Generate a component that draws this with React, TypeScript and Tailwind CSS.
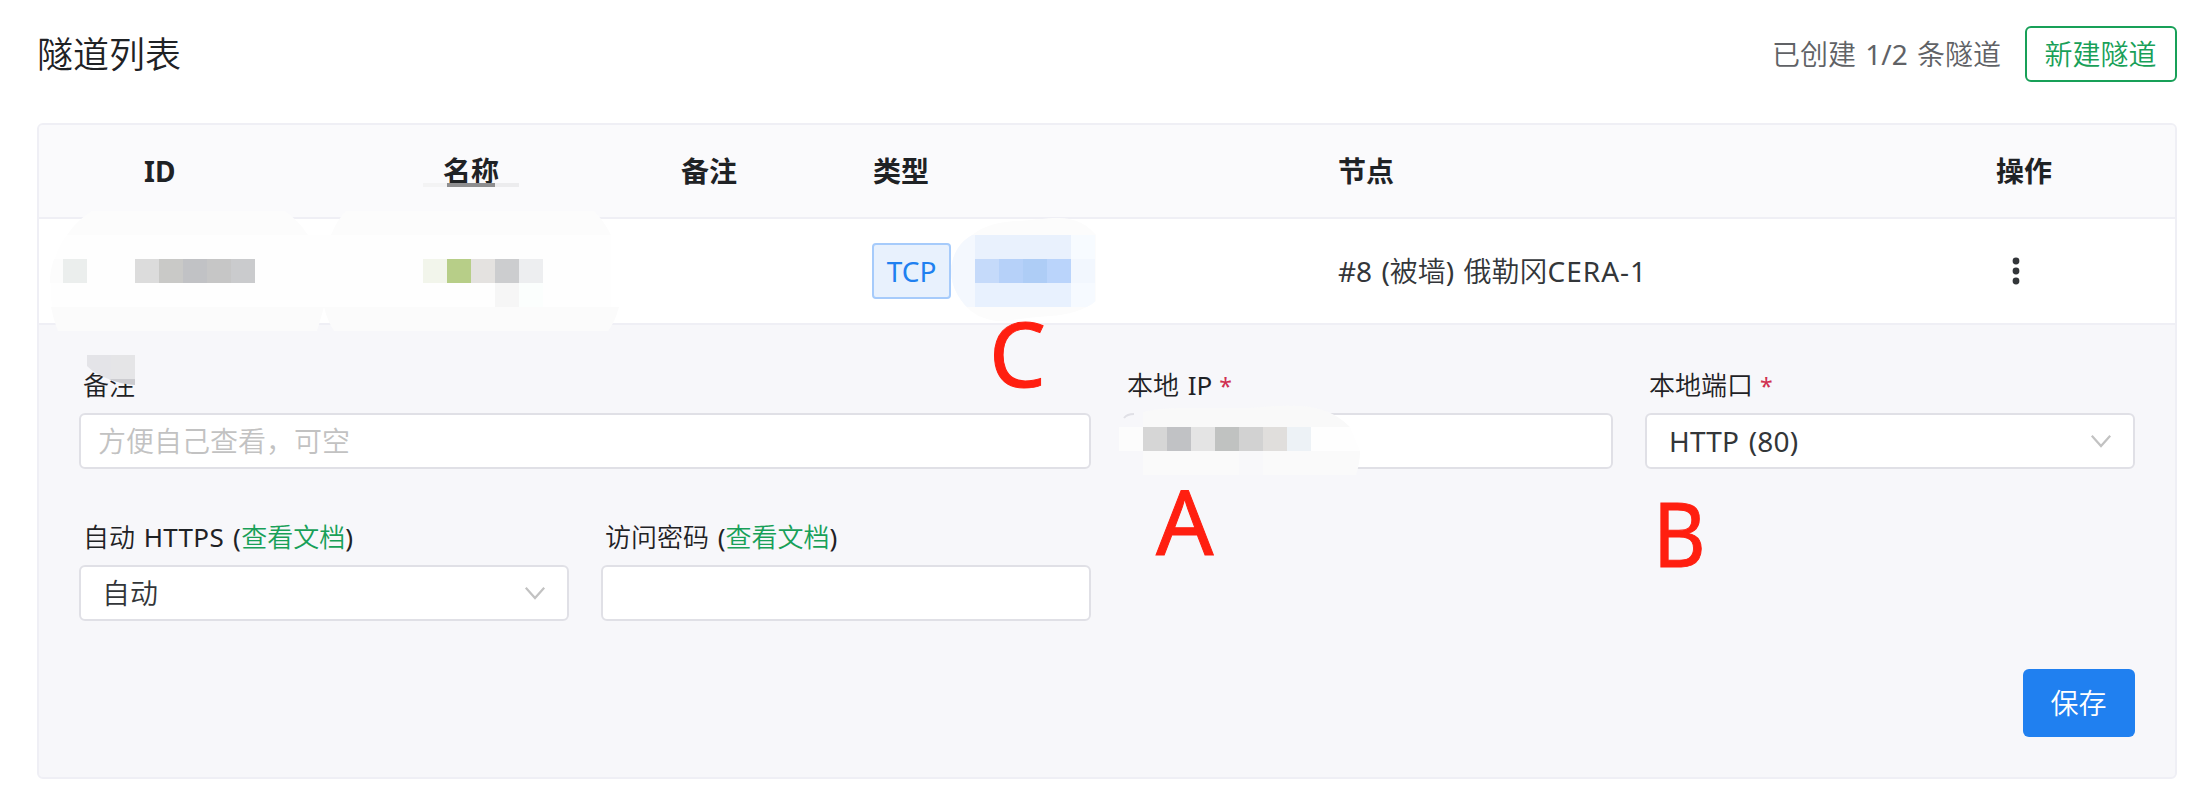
import React from "react";

const columns = "grid grid-cols-[380px_238px_192px_465px_559px_302px] items-center";

function Chevron() {
  return (
    <svg className="h-8 w-8 shrink-0" viewBox="0 0 32 32" fill="none" stroke="#c2c2c2" strokeWidth="2.2">
      <path d="M6.8 10.8 16 21 25.2 10.8" />
    </svg>
  );
}

function Field({ label, wide, children }: { label: React.ReactNode; wide?: boolean; children: React.ReactNode }) {
  return (
    <div className={wide ? "col-span-2" : ""}>
      <div className="flex h-[52px] items-start pl-1 pt-[4px] text-[26px] leading-[40px] text-[#1f2225]">
        <span className="whitespace-pre">{label}</span>
      </div>
      {children}
    </div>
  );
}

function Input({ children }: { children?: React.ReactNode }) {
  return (
    <div className="flex h-14 items-center rounded-md border-2 border-[#e0e0e6] bg-white pl-[17px] text-[28px] leading-none text-[#c2c2c2]">
      {children}
    </div>
  );
}

function Select({ children }: { children: React.ReactNode }) {
  return (
    <div className="flex h-14 items-center justify-between rounded-md border-2 border-[#e0e0e6] bg-white pl-[21px] pr-4 text-[28px] leading-none text-[#333639]">
      <span>{children}</span>
      <Chevron />
    </div>
  );
}

const Latin = ({ children }: { children: React.ReactNode }) => <span className="font-normal">{children}</span>;
const DocLink = () => <a className="text-[#18a058]">查看文档</a>;
const Star = () => <span className="-ml-px text-[23px] font-normal text-[#d03050]"> *</span>;

type Tile = [number, number, string];

const tiles: Tile[] = [
  [63, 259, "#ebeeed"],
  [135, 259, "#dcdcdc"],
  [159, 259, "#c9c9c7"],
  [183, 259, "#c1c2c5"],
  [207, 259, "#c6c6c6"],
  [231, 259, "#cacbcd"],
  [423, 259, "#f2f5eb"],
  [447, 259, "#b7ce88"],
  [471, 259, "#e4e2e0"],
  [495, 259, "#cccdcf"],
  [519, 259, "#edeef0"],
  [495, 283, "#f6f6f6"],
  [519, 283, "#fbfefd"],
];

const typeTiles: Tile[] = [
  [975, 235, "#e9f1fd"],
  [999, 235, "#e9f1fd"],
  [1023, 235, "#e9f1fd"],
  [1047, 235, "#e9f1fd"],
  [1071, 235, "#f7fbff"],
  [975, 259, "#c5dafa"],
  [999, 259, "#b6d1f9"],
  [1023, 259, "#aecdf6"],
  [1047, 259, "#bad4fb"],
  [1071, 259, "#f2f7fe"],
  [975, 283, "#e8f1fe"],
  [999, 283, "#e8f1fe"],
  [1023, 283, "#e8f1fe"],
  [1047, 283, "#e8f1fe"],
  [1071, 283, "#f6faff"],
];

const ipTiles: Tile[] = [
  [1119, 427, "#fcfcfc"],
  [1143, 427, "#d6d6d6"],
  [1167, 427, "#c1c2c5"],
  [1191, 427, "#e4e4e4"],
  [1215, 427, "#c0c2c1"],
  [1239, 427, "#d2d2d2"],
  [1263, 427, "#e0dedc"],
  [1287, 427, "#edf2f6"],
];

function Redactions() {
  const draw = ([x, y, c]: Tile) => (
    <rect key={`${x}-${y}`} x={x} y={y} width="24" height="24" fill={c} />
  );
  return (
    <svg className="pointer-events-none absolute left-0 top-0" width="2201" height="794">
      <path d="M92 211H285Q299 221 308 235H67Q77 220 92 211Z" fill="#fcfcfc" />
      <path d="M346 211H594Q604 221 611 235H331Q337 220 346 211Z" fill="#fcfcfc" />
      <path d="M67 235H611V307H52Q47 260 67 235Z" fill="#fefefe" />
      <path d="M51 307H324L317 331H58Q53 319 51 307Z" fill="#fbfbfb" />
      <path d="M324 307H619Q615 322 608 331H334Q327 320 324 307Z" fill="#fbfbfb" />
      <path d="M54 259H63V283H50Q50 270 54 259Z" fill="#fcfcfc" />
      {tiles.map(draw)}
      <rect x="423" y="183" width="24" height="4" fill="#f3f3f4" />
      <rect x="447" y="183" width="48" height="4" fill="#8e8e90" />
      <rect x="495" y="183" width="24" height="4" fill="#ececee" />
      <clipPath id="type-blob">
        <path d="M951 270C952 254 960 242 972 235C984 225 1003 221 1020 221C1035 220 1045 218 1058 218C1076 218 1088 225 1096 235V301C1085 310 1068 315 1050 316C1030 317 1012 321 998 321C984 320 972 314 964 304C955 293 951 282 951 270Z" />
      </clipPath>
      <g clipPath="url(#type-blob)">
        <rect x="950" y="215" width="150" height="110" fill="#fcfcfc" />
        <rect x="950" y="235" width="25" height="72" fill="#f4f8fe" />
        {typeTiles.map(draw)}
      </g>
      <path d="M87 355H135V385Q102 381 87 366Z" fill="#e4e4e8" />
      <path d="M111 355H135V379H111Z" fill="#e5e5e7" />
      <path d="M109 379H135V385Q120 384 109 379Z" fill="#ccccd0" />
      <rect x="1119" y="411" width="25" height="64" fill="#f7f7fa" />
      <path d="M1124 418Q1127 414 1134 414" fill="none" stroke="#e0e0e6" strokeWidth="2" />
      <path d="M1143 412Q1160 408 1180 408H1250Q1275 405 1300 406Q1330 407 1350 427H1143Z" fill="#f9f9f9" />
      <path d="M1143 427H1350L1360 451H1143Z" fill="#fefefe" />
      <path d="M1143 451H1360Q1360 463 1356 475H1143Z" fill="#fafafa" />
      <rect x="1239" y="451" width="24" height="24" fill="#f8f8fa" />
      {ipTiles.map(draw)}
    </svg>
  );
}

export default function App() {
  return (
    <main className="relative flex h-[794px] w-[2201px] flex-col overflow-hidden bg-white pl-[37px] pr-6 font-['Noto_Sans','Noto_Sans_CJK_SC',sans-serif] font-[350] [word-spacing:2px]">
      <header className="flex h-[123px] items-start justify-between pt-[26px]">
        <h1 className="text-[36px] leading-[58px] text-[#1f2225]">隧道列表</h1>
        <div className="flex items-center gap-6">
          <span className="text-[28px] leading-[54px] text-[#606266]">
            已创建 <Latin>1/2</Latin> 条隧道
          </span>
          <button className="flex h-14 w-[152px] items-center justify-center rounded-md border-2 border-[#18a058] pr-px text-[28px] text-[#18a058]">
            新建隧道
          </button>
        </div>
      </header>

      <section className="h-[656px] rounded-md border-2 border-[#efeff5] bg-[#f7f7fa]">
        <div className={`${columns} h-[94px] rounded-t-sm border-b-2 border-[#efeff5] bg-[#fafafc] text-[28px] font-bold text-[#1f2225]`}>
          <div className="pl-[105px]">ID</div>
          <div className="pl-6">名称</div>
          <div className="pl-6">备注</div>
          <div className="pl-6">类型</div>
          <div className="pl-6">节点</div>
          <div className="text-center">操作</div>
        </div>

        <div className={`${columns} h-[106px] border-b-2 border-[#efeff5] bg-white text-[28px] text-[#333639]`}>
          <div />
          <div />
          <div />
          <div className="pl-[23px]">
            <span className="flex h-14 w-[79px] items-center justify-center rounded-sm border-2 border-[#a6cbfb] bg-[#e8f1fd] font-normal text-[#2080f0]">
              TCP
            </span>
          </div>
          <div className="pl-6">
            <Latin>#8 (</Latin>被墙<Latin>)</Latin> 俄勒冈<span className="font-normal tracking-[1px]">CERA-1</span>
          </div>
          <div className="flex justify-center pr-4">
            <svg className="h-8 w-8" viewBox="0 0 32 32" fill="#333639">
              <circle cx="16" cy="6" r="3.4" />
              <circle cx="16" cy="16" r="3.4" />
              <circle cx="16" cy="26" r="3.4" />
            </svg>
          </div>
        </div>

        <div className="flex flex-col px-10 pt-9">
          <div className="grid grid-cols-4 gap-x-8 gap-y-11">
            <Field label="备注" wide>
              <Input>方便自己查看，可空</Input>
            </Field>
            <Field label={<>本地 <Latin>IP</Latin><Star /></>}>
              <Input />
            </Field>
            <Field label={<>本地端口<Star /></>}>
              <Select><span className="ml-px font-normal tracking-[0.2px]">HTTP (80)</span></Select>
            </Field>
            <Field label={<>自动 <span className="font-normal tracking-[0.3px]">HTTPS (</span><DocLink /><Latin>)</Latin></>}>
              <Select>自动</Select>
            </Field>
            <Field label={<>访问密码 <Latin>(</Latin><DocLink /><Latin>)</Latin></>}>
              <Input />
            </Field>
          </div>
          <button className="mt-12 flex h-[68px] w-28 items-center justify-center self-end rounded-md bg-[#2080f0] pr-px text-[28px] text-white">
            保存
          </button>
        </div>
      </section>

      <Redactions />
      <span className="absolute left-[1156px] top-[460px] text-[90px] leading-[120px] font-normal text-[#ff1f10] [-webkit-text-stroke:1px_#ff1f10]">A</span>
      <span className="absolute left-[1653px] top-[472px] origin-left scale-x-90 text-[90px] leading-[120px] font-normal text-[#ff1f10] [-webkit-text-stroke:1px_#ff1f10]">B</span>
      <span className="absolute left-[989px] top-[292px] text-[90px] leading-[120px] font-normal text-[#ff1f10] [-webkit-text-stroke:1px_#ff1f10]">C</span>
    </main>
  );
}
